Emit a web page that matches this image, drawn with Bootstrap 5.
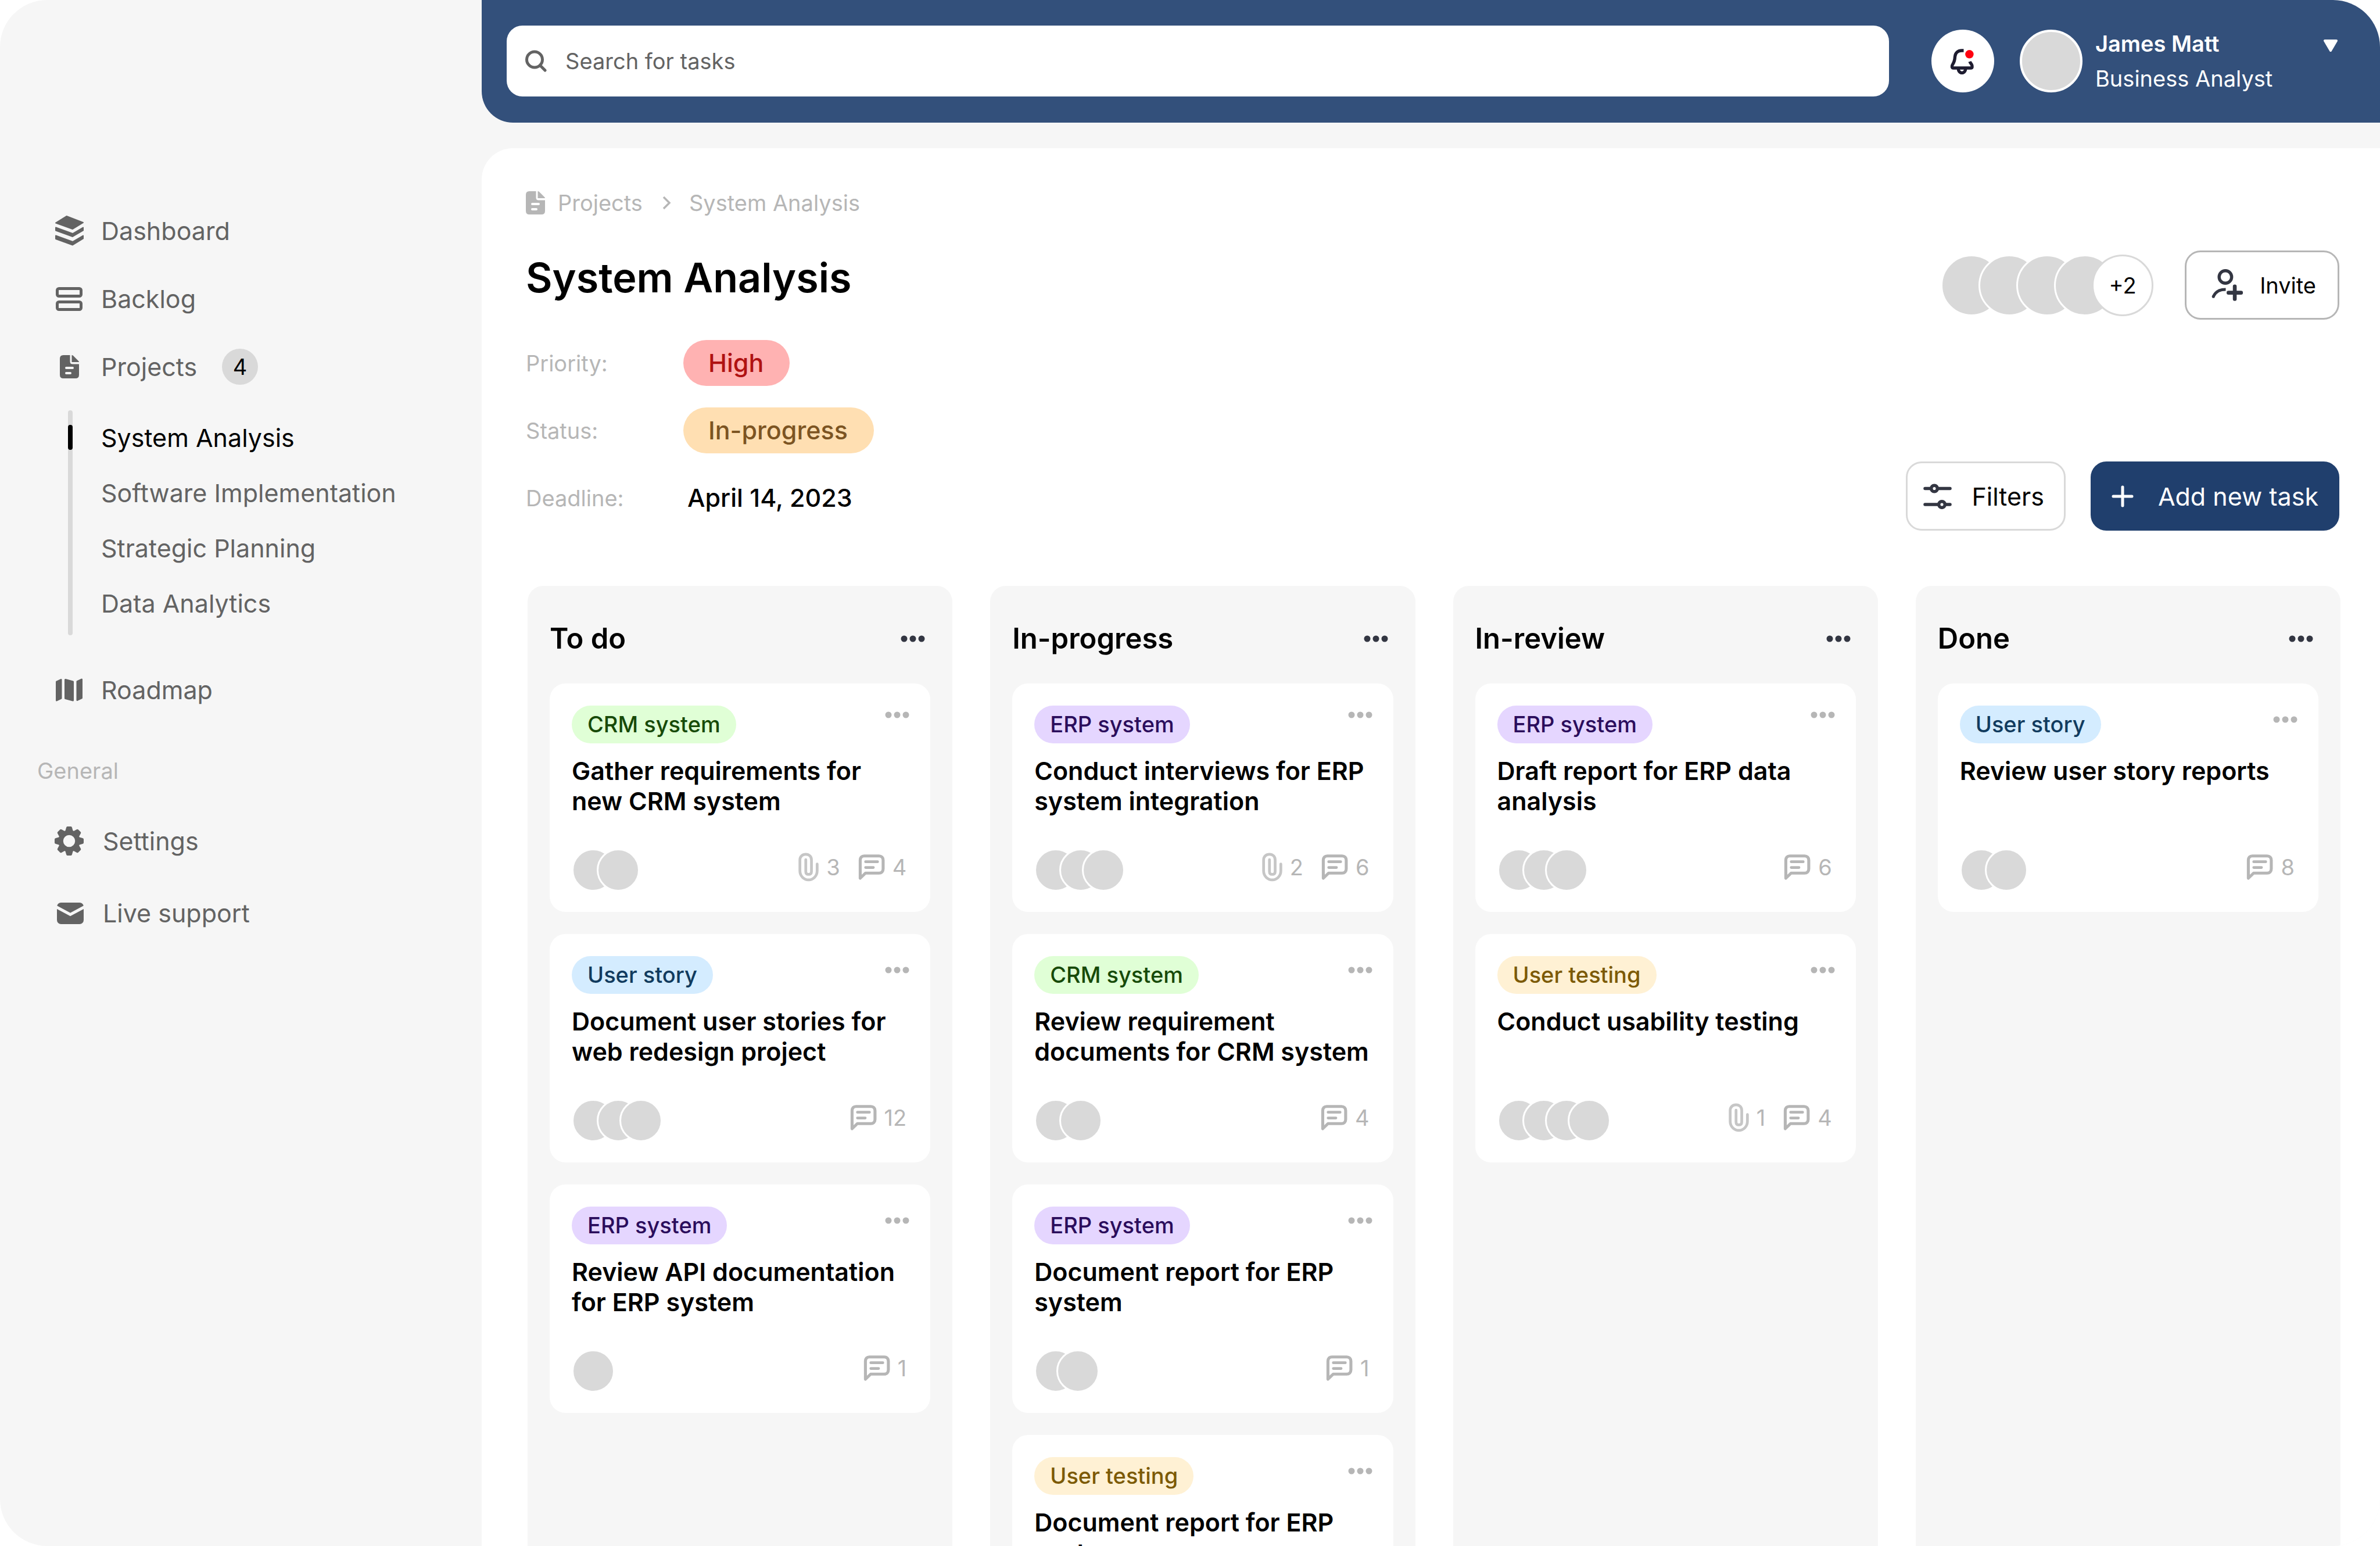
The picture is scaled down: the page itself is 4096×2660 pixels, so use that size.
<!DOCTYPE html>
<html lang="en">
<head>
<meta charset="utf-8">
<meta name="viewport" content="width=device-width, initial-scale=1">
<title>System Analysis – Projects</title>
<link href="https://cdn.jsdelivr.net/npm/bootstrap@5.3.0/dist/css/bootstrap.min.css" rel="stylesheet">
<style>
  :root { --ink:#000; --side:#636363; --muted:#b6b6b6; --panel:#f6f6f6; --grey:#d9d9d9; --navy:#33507b; --icon:#333642; }
  body { background:#fff; color:var(--ink); font-family:Inter,"Liberation Sans",sans-serif; font-size:38px; line-height:46px; }
  button { font:inherit; color:inherit; }
  a { color:inherit; text-decoration:none; }
  svg { display:block; flex:none; }
  .app { border-radius:81px; background:var(--panel); }

  /* Sidebar */
  .sidebar { width:829px; flex:none; padding:371px 64px 0 92px; color:var(--side); font-size:43px; line-height:52px; }
  .side-item { display:flex; align-items:center; gap:28px; height:52px; }
  .side-item.wide { gap:31px; }
  .side-icon { width:54px; display:flex; justify-content:center; flex:none; stroke:var(--panel); }
  .side-main { display:flex; flex-direction:column; gap:65px; }
  .side-count { width:62px; height:62px; margin-left:15px; border-radius:50%; background:var(--grey); color:#000; font-size:38px; line-height:62px; text-align:center; }
  .sub { display:flex; gap:49px; margin:49px 0 68px 25px; }
  .sub-track { width:8px; height:387px; border-radius:4px; background:var(--grey); padding-top:25px; flex:none; }
  .sub-thumb { height:43px; border-radius:4px; background:#000; }
  .sub-links { display:flex; flex-direction:column; gap:43px; padding-top:21px; white-space:nowrap; }
  .side-title { margin:90px 0 72px -28px; color:var(--muted); font-size:38px; line-height:46px; font-weight:400; }
  .side-general { display:flex; flex-direction:column; gap:72px; }

  /* Header */
  .topbar { height:211px; padding:0 72px 2px 43px; background:var(--navy); border-bottom-left-radius:54px; color:#fff; }
  .search { height:122px; border-radius:27px; background:#fff; padding:0 32px; gap:32px; color:var(--side); margin-right:73px; }
  .search input { border:0; outline:0; background:none; width:100%; padding:0; color:var(--side); }
  .search input::placeholder { color:var(--side); opacity:1; }
  .bell { width:108px; height:108px; border-radius:50%; border:0; background:#fff; padding:0; margin-right:44px; }
  .me { width:548px; border:0; background:none; padding:0; color:#fff; line-height:60px; }
  .me-face { width:108px; height:108px; border-radius:50%; background:var(--grey); border:4px solid #fff; margin-right:22px; flex:none; }
  .me-caret { margin:22px 0 0 auto; }

  /* Main panel */
  .panel { margin-top:44px; padding:71px 68px 0 76px; background:#fff; border-top-left-radius:54px; }
  .crumbs { color:var(--muted); height:46px; margin-bottom:59px; stroke:#fff; }
  .crumbs a { margin-left:22px; }
  .crumbs .crumb-sep { margin:0 4px 0 24px; }
  .page-title { font-size:70px; line-height:84px; font-weight:600; margin:5px 0 65px; }
  .facts { display:flex; flex-direction:column; gap:37px; margin:0 0 17px; }
  .fact { display:flex; align-items:center; height:79px; }
  .fact dt { width:271px; font-weight:400; color:var(--muted); }
  .fact dd { margin:0; font-size:43px; line-height:79px; font-weight:500; }
  .pill { border-radius:40px; padding:0 45px 0 43px; }
  .pill-high { background:#ffb2b2; color:#b01212; }
  .pill-progress { background:#ffdfb2; color:#7c5422; }
  .date { padding-left:7px; }
  .tools { padding-right:2px; }
  .tools-top { gap:54px; }
  .tools-end { gap:43px; }
  .tool { height:119px; border-radius:27px; background:#fff; display:flex; align-items:center; color:#000; }
  .invite { border:3px solid var(--muted); padding:0 37px 0 43px; gap:28px; }
  .filters { border:3px solid var(--grey); padding:0 34px 0 27px; gap:34px; font-size:43px; }
  .add { border:0; background:#203f6d; color:#fff; padding:0 36px; gap:42px; font-size:43px; }

  .faces { display:flex; }
  .face { width:74px; height:74px; border-radius:50%; border:3px solid #fff; background:var(--grey); }
  .face + .face { margin-left:-31px; }
  .face + .face + .face { margin-left:-35px; }
  .faces.tight .face + .face { margin-left:-36px; }
  .team .face { width:106px; height:106px; }
  .team .face + .face { margin-left:-41px; }
  .team .more { background:#fff; border-color:var(--grey); line-height:100px; text-align:center; }

  /* Board */
  .board { display:grid; grid-template-columns:repeat(4,1fr); gap:65px; margin:95px 0 0 3px; }
  .lane { background:var(--panel); border-radius:27px 27px 0 0; padding:0 38px; min-height:1700px; }
  .lane-head { height:168px; padding:13px 9px 0 0; }
  .lane-head h2 { font-size:49px; line-height:60px; font-weight:600; margin:0; }
  .dots { border:0; background:none; padding:0; color:var(--icon); }
  .lane-list { display:flex; flex-direction:column; gap:38px; }
  .task { min-height:393px; border-radius:27px; background:#fff; padding:38px 38px 35px; }
  .task .dots { color:var(--muted); margin:18px -2px 0 0; }
  .task .dots.up { margin-top:10px; }
  .tag { height:65px; line-height:65px; border-radius:33px; padding:0 27px; font-weight:500; }
  .tag-crm { background:#e0ffd6; color:#174a08; }
  .tag-erp { background:#e5d6ff; color:#2b0d5c; }
  .tag-story { background:#d4ecff; color:#113b5e; }
  .tag-test { background:#fff1d4; color:#7c5a04; }
  .task h3 { font-size:43px; line-height:52px; font-weight:600; min-height:104px; margin:21px 0 56px; }
  .stat { display:flex; align-items:center; gap:13px; color:var(--muted); }
  .stats { display:flex; gap:31px; padding:0 3px 10px 0; }
</style>
<script src="https://cdn.jsdelivr.net/npm/bootstrap@5.3.0/dist/js/bootstrap.bundle.min.js"></script>
</head>
<body>
<svg width="0" height="0" class="position-absolute" aria-hidden="true">
  <symbol id="i-dots" viewBox="0 0 42 12"><g fill="currentColor"><circle cx="6" cy="6" r="5.5"/><circle cx="21" cy="6" r="5.5"/><circle cx="36" cy="6" r="5.5"/></g></symbol>
  <symbol id="i-clip" viewBox="41 116 118 168"><path d="M150 182V222C150 252 126 274 100 274S50 252 50 222V158C50 138 65 125 84 125S117 138 117 158V225C117 237 110 242 100 242S84 237 84 225V157" fill="none" stroke="#c6c6c6" stroke-width="16" stroke-linecap="round"/></symbol>
  <symbol id="i-note" viewBox="380 122 152 146"><path d="M391 258V155C391 140 400 131 414 131H498C512 131 522 140 522 155V205C522 220 512 229 498 229H421Z" fill="none" stroke="currentColor" stroke-width="17" stroke-linejoin="round"/><path d="M422 164H490M422 197H466" stroke="currentColor" stroke-width="16" stroke-linecap="round"/></symbol>
  <symbol id="i-doc" viewBox="0 0 33 40"><path d="M6 0H17.500V11Q17.500 15.500 22 15.500H33V34Q33 40 27 40H6Q0 40 0 34V6Q0 0 6 0ZM20.500 0Q22 0 23 1L32 10Q33 11 33 12H20.500Z" fill="currentColor" stroke="none"/><path d="M11 22H22M11 31H18" stroke-width="4" stroke-linecap="round"/></symbol>
</svg>
<div class="app d-flex vh-100 overflow-hidden">

  <nav class="sidebar" aria-label="Main">
    <div class="side-main">
      <a class="side-item" href="#"><span class="side-icon"><svg width="49" height="52" viewBox="0 0 49 52"><g fill="currentColor" stroke="currentColor" stroke-width="2" stroke-linejoin="round"><path d="M19.500 1L48 12L30 23L1 12.500Z"/><path d="M1 20.500L30 31L48 20.500V25.500L30 36L1 25.500Z"/><path d="M1 34.500L30 45L48 34.500V39.500L30 50.500L1 40Z"/></g></svg></span>Dashboard</a>
      <a class="side-item" href="#"><span class="side-icon"><svg width="46" height="41" viewBox="0 0 46 41" fill="none" stroke="currentColor" stroke-width="5"><rect x="2.500" y="2.500" width="41" height="13" rx="3"/><rect x="2.500" y="25.500" width="41" height="13" rx="3"/></svg></span>Backlog</a>
      <a class="side-item" href="#"><span class="side-icon"><svg width="33" height="40"><use href="#i-doc"/></svg></span>Projects<span class="side-count">4</span></a>
    </div>
    <div class="sub">
      <div class="sub-track"><div class="sub-thumb"></div></div>
      <div class="sub-links">
        <a href="#" class="text-black" aria-current="page">System Analysis</a>
        <a href="#">Software Implementation</a>
        <a href="#">Strategic Planning</a>
        <a href="#">Data Analytics</a>
      </div>
    </div>
    <a class="side-item" href="#"><span class="side-icon"><svg width="46" height="40" viewBox="0 0 46 40"><g fill="currentColor" stroke="currentColor" stroke-width="3" stroke-linejoin="round"><path d="M1.500 6L9 2.500V34.500L1.500 38Z"/><path d="M16.500 2.500L29.500 6V38L16.500 34.500Z"/><path d="M37 5.500L44.500 2V34L37 37.500Z"/></g></svg></span>Roadmap</a>
    <h2 class="side-title">General</h2>
    <div class="side-general">
      <a class="side-item wide" href="#"><span class="side-icon"><svg width="50" height="50" viewBox="-25 -25 50 50" fill="currentColor" stroke="none"><circle r="14.500" fill="none" stroke="currentColor" stroke-width="8.500"/><g id="teeth"><path id="tooth" d="M-7 -16L-5 -23Q-4.500 -25 -3 -25H3Q4.500 -25 5 -23L7 -16Z"/><use href="#tooth" transform="rotate(90)"/><use href="#tooth" transform="rotate(180)"/><use href="#tooth" transform="rotate(270)"/></g><use href="#teeth" transform="rotate(45)"/></svg></span>Settings</a>
      <a class="side-item wide" href="#"><span class="side-icon"><svg class="ms-1" width="46" height="37" viewBox="0 0 46 37"><rect width="46" height="37" rx="7" fill="currentColor" stroke="none"/><path d="M-2 7L23 20.500L48 7" fill="none" stroke-width="5"/></svg></span>Live support</a>
    </div>
  </nav>

  <div class="d-flex flex-column flex-grow-1">
    <header class="topbar d-flex align-items-center flex-shrink-0">
      <label class="search d-flex align-items-center flex-grow-1">
        <svg width="37" height="38" viewBox="0 0 37 38" fill="none" stroke="currentColor" stroke-width="5"><circle cx="16" cy="16.500" r="13.500"/><path d="M26 27L34 35" stroke-linecap="round"/></svg>
        <input type="search" aria-label="Search for tasks" placeholder="Search for tasks">
      </label>
      <button class="bell d-flex align-items-center justify-content-center flex-shrink-0" aria-label="Notifications"><svg width="48" height="48" viewBox="73 91 160 160"><g fill="none" stroke="#1e1c30" stroke-width="18"><path d="M158 111H147C125 111 110 124 108 146C107 165 105 175 95 190C88 200 90 211 99 211H199C208 211 209 200 203 190C198 183 195 180 193 174" stroke-linejoin="round"/><path d="M127 213C127 229 136 239 148 239S169 229 169 213"/></g><circle cx="191" cy="132" r="24" fill="#ff0010"/></svg></button>
      <button class="me d-flex align-items-start text-start flex-shrink-0" aria-label="Account menu">
        <span class="me-face align-self-center"></span>
        <span class="text-nowrap"><span class="d-block fw-semibold">James Matt</span><span class="d-block">Business Analyst</span></span>
        <svg class="me-caret" width="26" height="22" viewBox="0 0 26 22"><path d="M3 3H23L13 20Z" fill="#fff" stroke="#fff" stroke-width="4" stroke-linejoin="round"/></svg>
      </button>
    </header>

    <main class="panel flex-grow-1">
      <nav class="crumbs d-flex align-items-center" aria-label="Breadcrumb">
        <svg width="33" height="40"><use href="#i-doc"/></svg>
        <a href="#">Projects</a>
        <svg class="crumb-sep" width="30" height="24" viewBox="0 0 30 24"><path d="M12 2L22 12L12 22" fill="none" stroke="currentColor" stroke-width="3.500"/></svg>
        <a href="#">System Analysis</a>
      </nav>
      <div class="d-flex justify-content-between">
        <div>
          <h1 class="page-title">System Analysis</h1>
          <dl class="facts">
            <div class="fact"><dt>Priority:</dt><dd class="pill pill-high">High</dd></div>
            <div class="fact"><dt>Status:</dt><dd class="pill pill-progress">In-progress</dd></div>
            <div class="fact"><dt>Deadline:</dt><dd class="date">April 14, 2023</dd></div>
          </dl>
        </div>
        <div class="tools d-flex flex-column justify-content-between align-items-end">
          <div class="tools-top d-flex align-items-center">
            <div class="faces team"><span class="face"></span><span class="face"></span><span class="face"></span><span class="face"></span><span class="face more">+2</span></div>
            <button class="tool invite"><svg width="55" height="57" viewBox="46 44 184 190" fill="none" stroke="#333642"><circle cx="126" cy="92" r="36" stroke-width="18"/><path d="M57 205C68 178 92 164 128 164" stroke-width="17"/><circle cx="57" cy="205" r="8.500" fill="#333642" stroke="none"/><path d="M180 147V219M144 183H216" stroke-width="22" stroke-linecap="round"/></svg>Invite</button>
          </div>
          <div class="tools-end d-flex">
            <button class="tool filters"><svg width="49" height="44" viewBox="0 0 49 44" fill="none" stroke="#333642" stroke-width="5.500" stroke-linecap="round"><path d="M3 8.500H12M26 8.500H46M3 36H25M39 36H46"/><circle cx="19" cy="8.500" r="5.300"/><circle cx="32" cy="36" r="5.300"/></svg>Filters</button>
            <button class="tool add"><svg width="38" height="38" viewBox="0 0 38 38" stroke="#fff" stroke-width="5" stroke-linecap="round"><path d="M19 3V35M3 19H35"/></svg>Add new task</button>
          </div>
        </div>
      </div>

      <div class="board">
        <section class="lane">
          <div class="lane-head d-flex justify-content-between align-items-center"><h2>To do</h2><button class="dots" aria-label="Column menu"><svg width="42" height="12"><use href="#i-dots"/></svg></button></div>
          <div class="lane-list">
            <article class="task">
              <div class="d-flex justify-content-between align-items-start"><span class="tag tag-crm">CRM system</span><button class="dots up" aria-label="Task menu"><svg width="42" height="12"><use href="#i-dots"/></svg></button></div>
              <h3>Gather requirements for new CRM system</h3>
              <div class="d-flex justify-content-between align-items-center"><div class="faces"><span class="face"></span><span class="face"></span></div><div class="stats"><span class="stat"><svg width="35" height="50"><use href="#i-clip"/></svg>3</span><span class="stat"><svg width="46" height="44"><use href="#i-note"/></svg>4</span></div></div>
            </article>
            <article class="task">
              <div class="d-flex justify-content-between align-items-start"><span class="tag tag-story">User story</span><button class="dots" aria-label="Task menu"><svg width="42" height="12"><use href="#i-dots"/></svg></button></div>
              <h3>Document user stories for web redesign project</h3>
              <div class="d-flex justify-content-between align-items-center"><div class="faces"><span class="face"></span><span class="face"></span><span class="face"></span></div><div class="stats"><span class="stat"><svg width="46" height="44"><use href="#i-note"/></svg>12</span></div></div>
            </article>
            <article class="task">
              <div class="d-flex justify-content-between align-items-start"><span class="tag tag-erp">ERP system</span><button class="dots" aria-label="Task menu"><svg width="42" height="12"><use href="#i-dots"/></svg></button></div>
              <h3>Review API documentation for ERP system</h3>
              <div class="d-flex justify-content-between align-items-center"><div class="faces"><span class="face"></span></div><div class="stats"><span class="stat"><svg width="46" height="44"><use href="#i-note"/></svg>1</span></div></div>
            </article>
          </div>
        </section>

        <section class="lane">
          <div class="lane-head d-flex justify-content-between align-items-center"><h2>In-progress</h2><button class="dots" aria-label="Column menu"><svg width="42" height="12"><use href="#i-dots"/></svg></button></div>
          <div class="lane-list">
            <article class="task">
              <div class="d-flex justify-content-between align-items-start"><span class="tag tag-erp">ERP system</span><button class="dots up" aria-label="Task menu"><svg width="42" height="12"><use href="#i-dots"/></svg></button></div>
              <h3>Conduct interviews for ERP system integration</h3>
              <div class="d-flex justify-content-between align-items-center"><div class="faces"><span class="face"></span><span class="face"></span><span class="face"></span></div><div class="stats"><span class="stat"><svg width="35" height="50"><use href="#i-clip"/></svg>2</span><span class="stat"><svg width="46" height="44"><use href="#i-note"/></svg>6</span></div></div>
            </article>
            <article class="task">
              <div class="d-flex justify-content-between align-items-start"><span class="tag tag-crm">CRM system</span><button class="dots" aria-label="Task menu"><svg width="42" height="12"><use href="#i-dots"/></svg></button></div>
              <h3>Review requirement documents for CRM system</h3>
              <div class="d-flex justify-content-between align-items-center"><div class="faces"><span class="face"></span><span class="face"></span></div><div class="stats"><span class="stat"><svg width="46" height="44"><use href="#i-note"/></svg>4</span></div></div>
            </article>
            <article class="task">
              <div class="d-flex justify-content-between align-items-start"><span class="tag tag-erp">ERP system</span><button class="dots" aria-label="Task menu"><svg width="42" height="12"><use href="#i-dots"/></svg></button></div>
              <h3>Document report for ERP system</h3>
              <div class="d-flex justify-content-between align-items-center"><div class="faces tight"><span class="face"></span><span class="face"></span></div><div class="stats"><span class="stat"><svg width="46" height="44"><use href="#i-note"/></svg>1</span></div></div>
            </article>
            <article class="task">
              <div class="d-flex justify-content-between align-items-start"><span class="tag tag-test">User testing</span><button class="dots" aria-label="Task menu"><svg width="42" height="12"><use href="#i-dots"/></svg></button></div>
              <h3>Document report for ERP system</h3>
            </article>
          </div>
        </section>

        <section class="lane">
          <div class="lane-head d-flex justify-content-between align-items-center"><h2>In-review</h2><button class="dots" aria-label="Column menu"><svg width="42" height="12"><use href="#i-dots"/></svg></button></div>
          <div class="lane-list">
            <article class="task">
              <div class="d-flex justify-content-between align-items-start"><span class="tag tag-erp">ERP system</span><button class="dots up" aria-label="Task menu"><svg width="42" height="12"><use href="#i-dots"/></svg></button></div>
              <h3>Draft report for ERP data analysis</h3>
              <div class="d-flex justify-content-between align-items-center"><div class="faces"><span class="face"></span><span class="face"></span><span class="face"></span></div><div class="stats"><span class="stat"><svg width="46" height="44"><use href="#i-note"/></svg>6</span></div></div>
            </article>
            <article class="task">
              <div class="d-flex justify-content-between align-items-start"><span class="tag tag-test">User testing</span><button class="dots" aria-label="Task menu"><svg width="42" height="12"><use href="#i-dots"/></svg></button></div>
              <h3>Conduct usability testing</h3>
              <div class="d-flex justify-content-between align-items-center"><div class="faces"><span class="face"></span><span class="face"></span><span class="face"></span><span class="face"></span></div><div class="stats"><span class="stat"><svg width="35" height="50"><use href="#i-clip"/></svg>1</span><span class="stat"><svg width="46" height="44"><use href="#i-note"/></svg>4</span></div></div>
            </article>
          </div>
        </section>

        <section class="lane">
          <div class="lane-head d-flex justify-content-between align-items-center"><h2>Done</h2><button class="dots" aria-label="Column menu"><svg width="42" height="12"><use href="#i-dots"/></svg></button></div>
          <div class="lane-list">
            <article class="task">
              <div class="d-flex justify-content-between align-items-start"><span class="tag tag-story">User story</span><button class="dots" aria-label="Task menu"><svg width="42" height="12"><use href="#i-dots"/></svg></button></div>
              <h3>Review user story reports</h3>
              <div class="d-flex justify-content-between align-items-center"><div class="faces"><span class="face"></span><span class="face"></span></div><div class="stats"><span class="stat"><svg width="46" height="44"><use href="#i-note"/></svg>8</span></div></div>
            </article>
          </div>
        </section>
      </div>
    </main>
  </div>
</div>
</body>
</html>
